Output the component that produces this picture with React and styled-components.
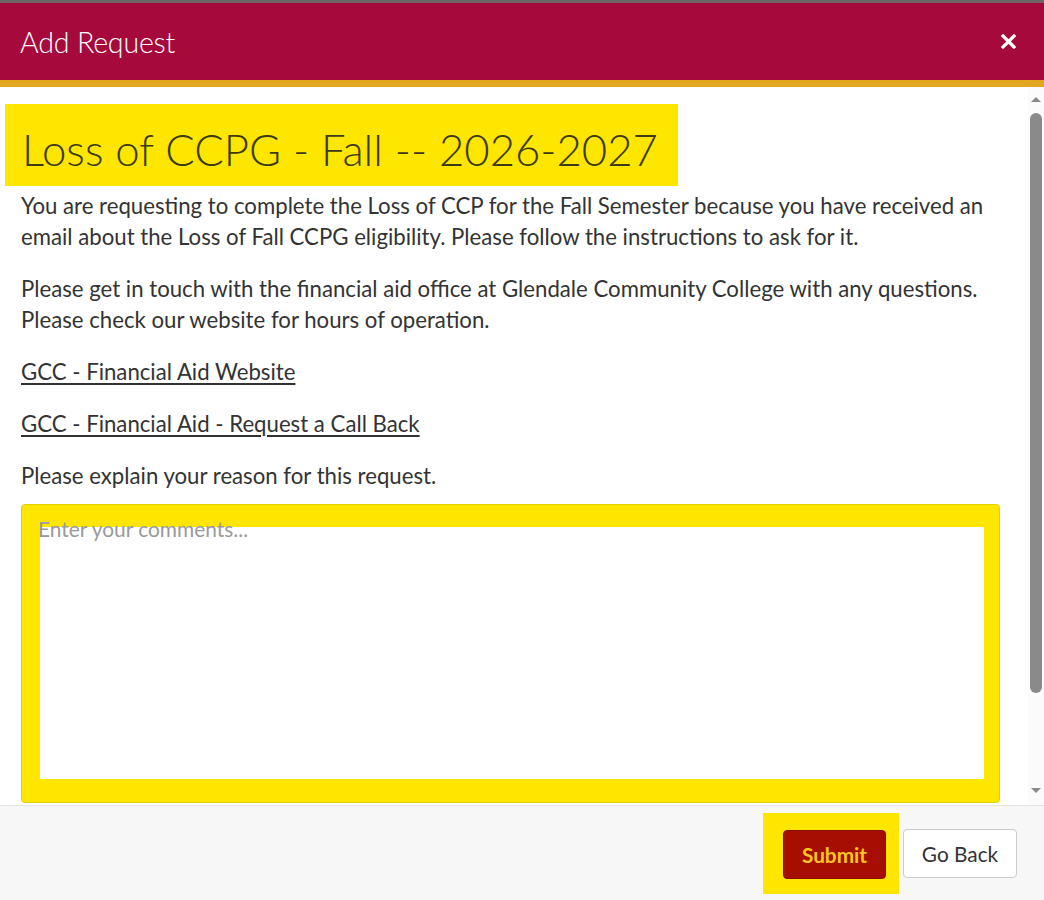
import React from "react";
import styled, { createGlobalStyle } from "styled-components";

const GlobalStyle = createGlobalStyle`
  html, body { margin: 0; padding: 0; height: 100%; }
  body { font-family: Lato, "Open Sans", "Liberation Sans", sans-serif; background: #6d6467; }
  #root { height: 100%; }
  * { box-sizing: border-box; }
`;

const Modal = styled.div`
  height: 100vh;
  padding-top: 3px;
  display: flex;
  flex-direction: column;
`;

const Header = styled.header`
  flex: 0 0 84px;
  background: #a60a3d;
  border-bottom: 7px solid #e3a620;
  display: flex;
  align-items: center;
  justify-content: space-between;
  padding: 0 28px 0 20px;
`;

const HeaderTitle = styled.h1`
  margin: 0;
  font-family: Lato, sans-serif;
  font-weight: 300;
  font-size: 28.6px;
  color: #fff;
  letter-spacing: -0.2px;
`;

const CloseButton = styled.button`
  border: 0;
  background: transparent;
  padding: 0;
  width: 16px;
  height: 16px;
  display: flex;
  align-items: center;
  justify-content: center;
  cursor: pointer;
`;

const BodyRow = styled.div`
  flex: 1 1 auto;
  min-height: 0;
  display: flex;
  background: #fff;
  overflow: hidden;
`;

const Content = styled.div`
  flex: 1 1 auto;
  min-width: 0;
  overflow: hidden;
  padding: 17px 28px 0 21px;
  color: #333;
`;

const ScrollBar = styled.div`
  flex: 0 0 16px;
  display: flex;
  flex-direction: column;
  background: #fbfbfb;
`;

const ScrollArrow = styled.div`
  flex: 0 0 24px;
  display: flex;
  justify-content: center;
  align-items: ${(p) => (p.$down ? "flex-start" : "flex-end")};
  padding: ${(p) => (p.$down ? "7px 0 0" : "0 0 9px")};

  &::before {
    content: "";
    width: 0;
    height: 0;
    border-left: 5px solid transparent;
    border-right: 5px solid transparent;
    ${(p) => (p.$down ? "border-top: 5px solid #8a8a8a;" : "border-bottom: 5px solid #8a8a8a;")}
  }
`;

const ScrollTrack = styled.div`
  flex: 1 1 auto;
  padding: 2px 2px 0;
`;

const ScrollThumb = styled.div`
  height: 580px;
  border-radius: 6px;
  background: #8a8a8a;
`;

const RequestTitle = styled.h2`
  display: inline-block;
  margin: 0 0 4px -16px;
  height: 82px;
  padding: 0 20px 0 17px;
  background: #ffe600;
  font-family: Lato, sans-serif;
  font-weight: 300;
  font-size: 43.7px;
  line-height: 90px;
  color: #3d3a12;
  white-space: nowrap;
`;

const Paragraph = styled.p`
  margin: 0 0 21px;
  font-size: 22.2px;
  line-height: 31px;
  color: #333;
`;

const Link = styled.a`
  color: #333;
  text-decoration: underline;
  text-underline-offset: 3px;
`;

const Comments = styled.textarea`
  display: block;
  width: 100%;
  height: 299px;
  margin-top: -8px;
  resize: none;
  border: 1px solid #e2cf00;
  border-radius: 4px;
  padding: 9px 16px;
  font-family: Lato, sans-serif;
  font-size: 20.9px;
  line-height: 30px;
  color: #333;
  background-color: #ffe600;
  background-image: linear-gradient(#fff, #fff);
  background-repeat: no-repeat;
  background-position: 18px 22px;
  background-size: calc(100% - 33px) calc(100% - 45px);
  outline: none;

  &::placeholder { color: #9a9a9a; }
`;

const Footer = styled.footer`
  flex: 0 0 95px;
  background: #f7f7f7;
  border-top: 1px solid #e3e3e3;
  display: flex;
  align-items: center;
  justify-content: flex-end;
  padding: 0 27px 0 0;
  gap: 4px;
`;

const Highlight = styled.div`
  background: #ffe600;
  padding: 17px 13px 15px 20px;
  display: flex;
`;

const Button = styled.button`
  height: 49px;
  border-radius: 4px;
  font-family: Lato, sans-serif;
  font-size: 20.8px;
  cursor: pointer;
  padding: 0;
  background: ${(p) => (p.$primary ? "#a50e00" : "#fff")};
  color: ${(p) => (p.$primary ? "#f8c61c" : "#333")};
  font-weight: ${(p) => (p.$primary ? 700 : 400)};
  border: 1px solid ${(p) => (p.$primary ? "#8e0c00" : "#cccccc")};
  width: ${(p) => p.$width}px;
`;

export default function App() {
  return (
    <>
      <GlobalStyle />
      <Modal>
        <Header>
          <HeaderTitle>Add Request</HeaderTitle>
          <CloseButton aria-label="Close">
            <svg width="15" height="15" viewBox="0 0 15 15">
              <path d="M2 2 L13 13 M13 2 L2 13" stroke="#fff" strokeWidth="3.2" strokeLinecap="square" />
            </svg>
          </CloseButton>
        </Header>
        <BodyRow>
          <Content>
            <RequestTitle>Loss of CCPG - Fall -- 2026-2027</RequestTitle>
            <Paragraph>
              You are requesting to complete the Loss of CCP for the Fall Semester because you have received an
              email about the Loss of Fall CCPG eligibility. Please follow the instructions to ask for it.
            </Paragraph>
            <Paragraph>
              Please get in touch with the financial aid office at Glendale Community College with any questions.
              Please check our website for hours of operation.
            </Paragraph>
            <Paragraph>
              <Link href="#">GCC - Financial Aid Website</Link>
            </Paragraph>
            <Paragraph>
              <Link href="#">GCC - Financial Aid - Request a Call Back</Link>
            </Paragraph>
            <Paragraph>Please explain your reason for this request.</Paragraph>
            <Comments placeholder="Enter your comments..." />
          </Content>
          <ScrollBar aria-hidden="true">
            <ScrollArrow />
            <ScrollTrack>
              <ScrollThumb />
            </ScrollTrack>
            <ScrollArrow $down />
          </ScrollBar>
        </BodyRow>
        <Footer>
          <Highlight>
            <Button $primary $width={103}>Submit</Button>
          </Highlight>
          <Button $width={114}>Go Back</Button>
        </Footer>
      </Modal>
    </>
  );
}
